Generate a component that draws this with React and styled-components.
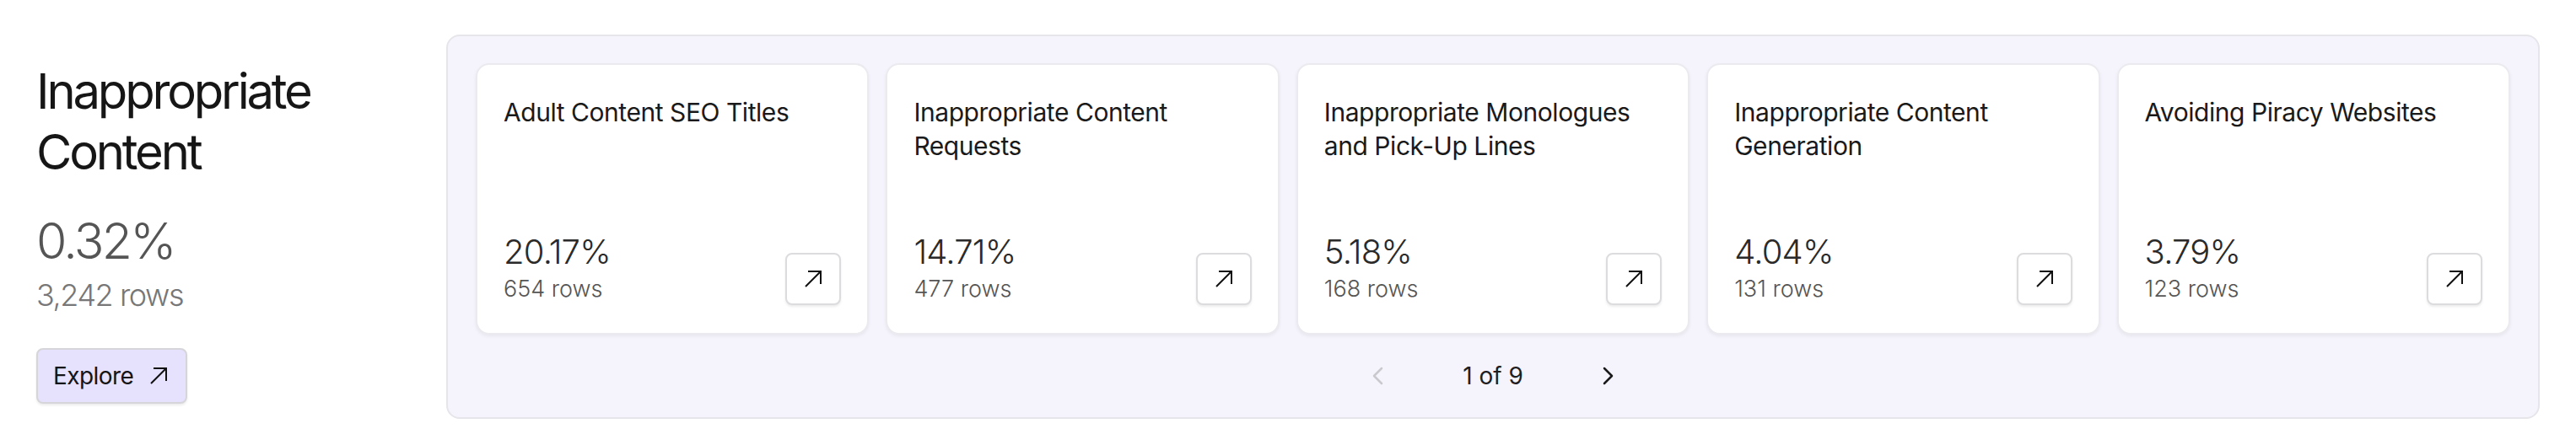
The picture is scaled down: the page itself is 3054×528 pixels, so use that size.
import React from "react";
import styled, { createGlobalStyle } from "styled-components";

const GlobalStyle = createGlobalStyle`
  body {
    margin: 0;
    background: #ffffff;
    font-family: Inter, "Noto Sans", sans-serif;
    color: #171717;
  }
  * {
    box-sizing: border-box;
  }
`;

const topics = [
  { title: "Adult Content SEO Titles", pct: "20.17%", rows: "654 rows" },
  { title: "Inappropriate Content Requests", pct: "14.71%", rows: "477 rows" },
  { title: "Inappropriate Monologues and Pick-Up Lines", pct: "5.18%", rows: "168 rows" },
  { title: "Inappropriate Content Generation", pct: "4.04%", rows: "131 rows" },
  { title: "Avoiding Piracy Websites", pct: "3.79%", rows: "123 rows" },
];

const ArrowIcon = () => (
  <svg width="22" height="22" viewBox="0 0 22 22" fill="none">
    <path d="M2 20 L20 2 M5 2 H20 V17" stroke="#111" strokeWidth="2" />
  </svg>
);

const Chevron = ({ dir }) => (
  <svg width="14" height="22" viewBox="0 0 14 22" fill="none">
    <path
      d={dir === "left" ? "M12 2 L3 11 L12 20" : "M2 2 L11 11 L2 20"}
      stroke="currentColor"
      strokeWidth="2.5"
      strokeLinejoin="round"
      strokeLinecap="round"
    />
  </svg>
);

export default function App() {
  return (
    <>
      <GlobalStyle />
      <Page>
        <Sidebar>
          <Heading>Inappropriate Content</Heading>
          <Share>0.32%</Share>
          <RowCount>3,242 rows</RowCount>
          <ExploreButton>
            Explore
            <ArrowIcon />
          </ExploreButton>
        </Sidebar>
        <Panel>
          <CardRow>
            {topics.map((t) => (
              <Card key={t.title}>
                <CardTitle>{t.title}</CardTitle>
                <CardFooter>
                  <div>
                    <CardPct>{t.pct}</CardPct>
                    <CardRows>{t.rows}</CardRows>
                  </div>
                  <IconButton>
                    <ArrowIcon />
                  </IconButton>
                </CardFooter>
              </Card>
            ))}
          </CardRow>
          <Pagination>
            <PageButton disabled>
              <Chevron dir="left" />
            </PageButton>
            <PageLabel>1 of 9</PageLabel>
            <PageButton>
              <Chevron dir="right" />
            </PageButton>
          </Pagination>
        </Panel>
      </Page>
    </>
  );
}

const Page = styled.div`
  display: flex;
  align-items: flex-start;
  gap: 46px;
  padding: 41px 43px 33px;
`;

const Sidebar = styled.div`
  width: 440px;
  flex-shrink: 0;
  padding-top: 31px;
  display: flex;
  flex-direction: column;
  align-items: flex-start;
`;

const Heading = styled.h1`
  margin: 0;
  font-size: 58px;
  line-height: 72px;
  font-weight: 400;
  letter-spacing: -0.055em;
  color: #161616;
`;

const Share = styled.div`
  margin-top: 34px;
  font-size: 59px;
  line-height: 72px;
  font-weight: 300;
  letter-spacing: -0.045em;
  color: #555555;
`;

const RowCount = styled.div`
  font-size: 36px;
  line-height: 56px;
  font-weight: 300;
  letter-spacing: -0.04em;
  color: #777777;
`;

const ExploreButton = styled.button`
  margin-top: 35px;
  height: 66px;
  display: flex;
  align-items: center;
  gap: 19px;
  padding: 0 21px 0 18px;
  font-family: inherit;
  font-size: 28px;
  letter-spacing: -0.02em;
  color: #151515;
  background: #e6e2fd;
  border: 2px solid #d6d6da;
  border-radius: 8px;
  box-shadow: 0 2px 3px rgba(0, 0, 0, 0.08);
`;

const Panel = styled.div`
  flex: 1;
  background: #f5f4fd;
  border: 2px solid #e6e6ea;
  border-radius: 16px;
  padding: 32px 33px 0;
`;

const CardRow = styled.div`
  display: grid;
  grid-template-columns: repeat(5, 1fr);
  gap: 20px;
`;

const Card = styled.div`
  height: 322px;
  display: flex;
  flex-direction: column;
  justify-content: space-between;
  background: #ffffff;
  border: 2px solid #ebebef;
  border-radius: 16px;
  box-shadow: 0 2px 4px rgba(0, 0, 0, 0.06);
  padding: 36px 31px 32px;
`;

const CardTitle = styled.div`
  font-size: 30px;
  line-height: 40px;
  letter-spacing: -0.015em;
  color: #1a1a1a;
`;

const CardFooter = styled.div`
  display: flex;
  justify-content: space-between;
  align-items: flex-end;
`;

const CardPct = styled.div`
  font-size: 40px;
  line-height: 48px;
  font-weight: 300;
  letter-spacing: -0.02em;
  color: #2a2a2a;
`;

const CardRows = styled.div`
  font-size: 27px;
  line-height: 40px;
  font-weight: 300;
  color: #555555;
`;

const IconButton = styled.button`
  width: 66px;
  height: 62px;
  margin-bottom: 1px;
  display: flex;
  align-items: center;
  justify-content: center;
  background: #ffffff;
  border: 2px solid #dcdcdf;
  border-radius: 8px;
  box-shadow: 0 2px 3px rgba(0, 0, 0, 0.08);
  padding: 0;
`;

const Pagination = styled.div`
  height: 98px;
  display: flex;
  align-items: center;
  justify-content: center;
  gap: 81px;
`;

const PageButton = styled.button`
  width: 40px;
  height: 40px;
  display: flex;
  align-items: center;
  justify-content: center;
  background: none;
  border: none;
  padding: 0;
  color: ${(p) => (p.disabled ? "#c9c9ce" : "#1a1a1a")};
`;

const PageLabel = styled.div`
  font-size: 28px;
  line-height: 40px;
  color: #1f1f1f;
`;
